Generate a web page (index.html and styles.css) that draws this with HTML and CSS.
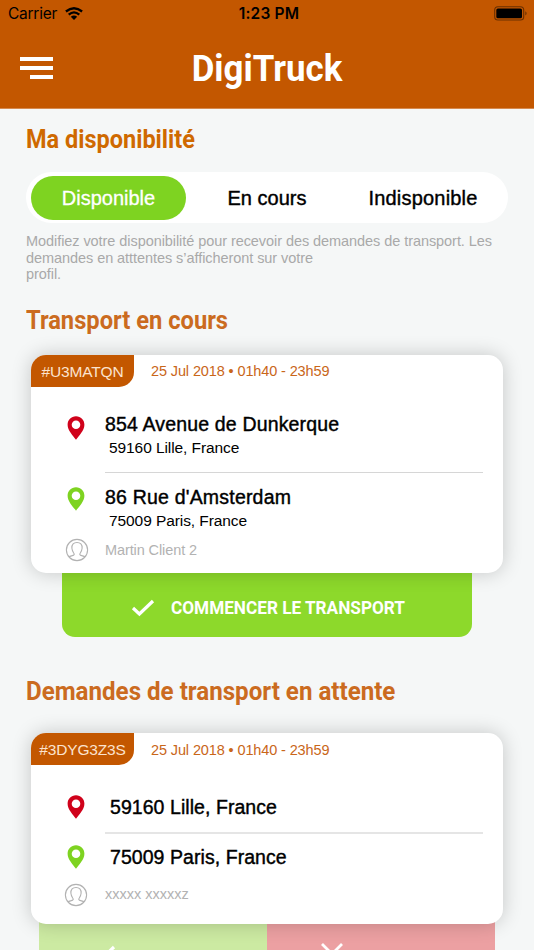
FILE: index.html
```html
<!DOCTYPE html>
<html lang="fr">
<head>
<meta charset="utf-8">
<title>DigiTruck</title>
<link rel="stylesheet" href="styles.css">
</head>
<body>
<svg class="defs" aria-hidden="true">
  <symbol id="pin" viewBox="0 0 18 24"><path fill-rule="evenodd" d="M9 .3C4.200.3.600 4 .600 8.700C.600 14.500 6 19.500 9 23.700C12 19.500 17.400 14.500 17.400 8.700C17.400 4 13.800.3 9 .3ZM9 4.500A4.300 4.300 0 1 1 9 13.100A4.300 4.300 0 1 1 9 4.500Z"/></symbol>
  <symbol id="user" viewBox="0 0 24 24"><g fill="none" stroke="currentColor" stroke-width="1.1"><circle cx="12" cy="12" r="10.600"/><path d="M4 19C5 17.700 8.800 18 9.200 16.500C9.500 15.200 7.200 14 6.900 10.300C6.600 6.500 8.700 4.500 12 4.500C15.300 4.500 17.400 6.500 17.100 10.300C16.800 14 14.500 15.200 14.800 16.500C15.200 18 19 17.700 20 19"/></g></symbol>
</svg>
<header class="header">
  <div class="status">
    <div class="carrier"><span>Carrier</span>
      <svg width="18" height="13" viewBox="0 0 18 13"><g fill="none" stroke="#000" stroke-width="2.300"><path d="M.9 4.500Q9-2 17.100 4.500"/><path d="M3.700 7.600Q9 3.200 14.300 7.600"/></g><path d="M5.800 9.700Q9 7.200 12.200 9.700L9 13Z"/></svg>
    </div>
    <div class="time">1:23 PM</div>
    <svg class="battery" width="34" height="15" viewBox="0 0 34 15"><rect x=".7" y=".7" width="29" height="13.300" rx="3.300" fill="none" stroke="#6b3000" stroke-width="1.100"/><rect x="2.300" y="2.400" width="25.700" height="9.900" rx="1.600"/><path d="M31.300 5.200Q34 7.300 31.300 9.500Z" fill="#6b3000"/></svg>
  </div>
  <div class="nav">
    <div class="burger"><i></i><i></i><i></i></div>
    <h1>DigiTruck</h1>
  </div>
</header>
<main>
  <h2 class="first">Ma disponibilité</h2>
  <div class="segments"><span class="on">Disponible</span><span>En cours</span><span class="off">Indisponible</span></div>
  <p class="hint">Modifiez votre disponibilité pour recevoir des demandes de transport. Les<br>demandes en atttentes s’afficheront sur votre<br>profil.</p>

  <h2 class="current-title">Transport en cours</h2>
  <article class="card current">
    <div class="top"><span class="tag">#U3MATQN</span><span class="date">25 Jul 2018 • 01h40 - 23h59</span></div>
    <div class="stop from"><svg class="pin red"><use href="#pin"/></svg><div><strong>854 Avenue de Dunkerque</strong><small>59160 Lille, France</small></div></div>
    <div class="rule"></div>
    <div class="stop to"><svg class="pin green"><use href="#pin"/></svg><div><strong>86 Rue d'Amsterdam</strong><small>75009 Paris, France</small></div></div>
    <div class="client"><svg><use href="#user"/></svg><span>Martin Client 2</span></div>
  </article>
  <div class="start"><svg width="24" height="18" viewBox="0 0 24 18"><path d="M2 9L8.400 15L22 2" fill="none" stroke="#fff" stroke-width="3.200"/></svg><span>COMMENCER LE TRANSPORT</span></div>

  <h2 class="pending-title">Demandes de transport en attente</h2>
  <article class="card pending">
    <div class="top"><span class="tag">#3DYG3Z3S</span><span class="date">25 Jul 2018 • 01h40 - 23h59</span></div>
    <div class="stop from"><svg class="pin red"><use href="#pin"/></svg><strong>59160 Lille, France</strong></div>
    <div class="rule"></div>
    <div class="stop to"><svg class="pin green"><use href="#pin"/></svg><strong>75009 Paris, France</strong></div>
    <div class="client"><svg><use href="#user"/></svg><span class="masked">xxxxx xxxxxz</span></div>
  </article>
  <div class="actions">
    <div class="accept"><svg width="24" height="18" viewBox="0 0 24 18"><path d="M2 9L8.400 15L22 2" fill="none" stroke="#fff" stroke-width="3.200"/></svg></div>
    <div class="refuse"><svg width="22" height="22" viewBox="0 0 22 22"><path d="M1 1L21 21M21 1L1 21" fill="none" stroke="#fff" stroke-width="2.800"/></svg></div>
  </div>
</main>
</body>
</html>
```
FILE: styles.css
```css
* { box-sizing: border-box; }
body { margin: 0; height: 950px; overflow: hidden; background: #f5f7f7; color: #000; font-family: "Liberation Sans", Arial, sans-serif; }
.defs { position: absolute; width: 0; height: 0; }
svg { display: block; flex: none; }

.header { height: 109px; background: #c35700; border-bottom: 1px solid #d58a50; }
.status { height: 28px; display: grid; grid-template-columns: 1fr auto 1fr; align-items: center; padding: 0 6px 0 8px; font: 400 15.5px/28px Inter, sans-serif; }
.carrier { display: flex; align-items: center; gap: 8px; letter-spacing: -.25px; }
.carrier svg { margin-top: -1px; }
.time { font-weight: 600; letter-spacing: .2px; padding-left: 2px; }
.battery { justify-self: end; margin-top: -2px; }
.nav { height: 80px; display: grid; grid-template-columns: 33px 1fr 33px; align-items: center; padding: 0 20px; }
.burger { display: flex; flex-direction: column; align-items: flex-end; gap: 5px; }
.burger i { width: 33px; height: 4px; background: #fff; }
.burger i:last-child { width: 23px; }
h1 { margin: 0; color: #fff; text-align: center; font: 700 37.5px/44px Roboto, sans-serif; transform: scaleX(.93); }

main { padding: 0 26px; }
h2 { margin: 0; color: #cb6b20; font: 700 25px/30px Roboto, sans-serif; white-space: nowrap; transform-origin: left; transform: scaleX(.948); }
h2.first { padding-top: 16px; color: #cf6900; transform: scaleX(.94); }
.segments { margin-top: 17px; height: 51px; width: 482px; padding: 4px 5px; border-radius: 26px; background: #fff; display: grid; grid-template-columns: 155px 162px 150px; font-size: 20px; line-height: 45px; text-align: center; -webkit-text-stroke: .4px; }
.segments span { height: 44px; border-radius: 22px; }
.segments .on { background: #7ed321; color: #fff; -webkit-text-stroke: .3px; }
.segments .off { letter-spacing: .2px; }
.hint { margin: 10px 0 0; font-size: 14.500px; line-height: 16.500px; letter-spacing: -.065px; color: #a9a9a9; white-space: nowrap; }
.current-title { margin-top: 23px; }

.card { position: relative; z-index: 1; width: 472px; margin-left: 5px; border-radius: 15px; background: #fff; box-shadow: 0 0 20px rgba(0,0,0,.2); }
.current { height: 218px; margin-top: 19px; }
.top { display: flex; height: 32px; }
.tag { width: 103px; height: 32px; border-radius: 15px 0 15px 0; background: #c35700; color: #fbe3cf; font-size: 15.500px; line-height: 33px; letter-spacing: -.17px; text-align: center; }
.date { margin-left: 17px; color: #c96619; font-size: 14.500px; line-height: 33px; letter-spacing: -.12px; }
.stop { display: flex; }
.stop > .pin { width: 18px; height: 24px; margin-left: 35.500px; margin-right: 20.500px; }
.red { fill: #d0021b; }
.green { fill: #7ed321; }
.stop strong { display: block; font-weight: 400; font-size: 19.500px; line-height: 24px; letter-spacing: .2px; -webkit-text-stroke: .4px; white-space: nowrap; }
.stop small { display: block; margin-left: 4px; font-size: 15.500px; line-height: 22px; letter-spacing: -.08px; }
.rule { height: 1px; margin: 0 20px 0 74px; background: #d6d6d6; }
.current .from { height: 85px; padding-top: 26px; }
.current .from strong { margin-top: -1px; margin-bottom: 1px; letter-spacing: .16px; }
.current .from .pin { margin-top: 3px; }
.current .to { height: 65px; padding-top: 12px; }
.current .to small { margin-top: 1px; }
.current .to .pin { margin-top: 2px; }
.client { display: flex; align-items: center; height: 24px; color: #b2b2b2; font-size: 14.500px; letter-spacing: -.1px; }
.client svg { width: 24px; height: 24px; margin-left: 34px; margin-right: 16px; }
.start { width: 410px; height: 64px; margin-left: 36px; padding: 7px 0 0 69px; border-radius: 0 0 13px 13px; background: #8dd92b; display: flex; align-items: center; gap: 16px; color: #fff; font: 700 18.500px/24px Roboto, sans-serif; white-space: nowrap; }
.start span { transform: scaleX(.929); transform-origin: left; }

.pending-title { margin-top: 40px; transform: scaleX(.965); }
.pending { height: 191px; margin-top: 26px; }
.pending .date { line-height: 35px; }
.pending .stop strong { margin-left: 5px; letter-spacing: .06px; }
.pending .from { height: 67px; padding-top: 30px; }
.pending .rule { height: 2px; background: #e5e5e5; }
.pending .to { height: 49px; padding-top: 11px; }
.pending .client svg { margin-left: 33px; margin-right: 17px; }
.masked { letter-spacing: 0; margin-top: -2px; }
.actions { height: 65px; margin-top: -2px; margin-left: 13px; width: 456px; display: grid; grid-template-columns: 1fr 1fr; }
.accept { background: #cceaa2; padding: 23px 0 0 53px; }
.refuse { background: #eca0a2; padding: 21px 0 0 54px; }
```
